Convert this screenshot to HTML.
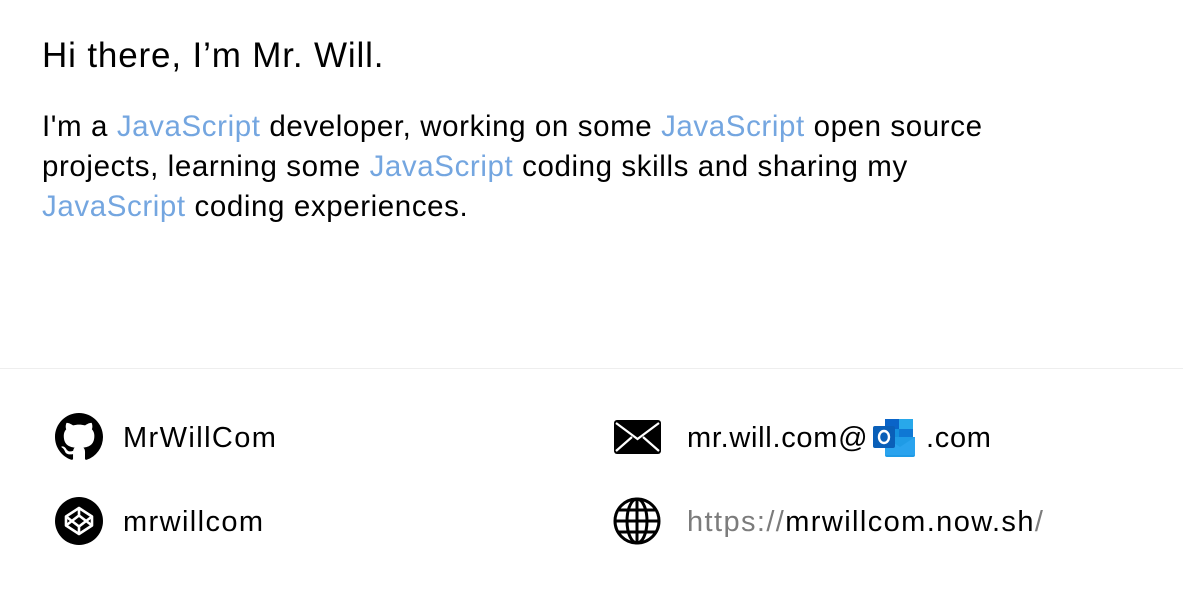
<!DOCTYPE html>
<html><head><meta charset="utf-8"><style>
html,body{margin:0;padding:0;background:#fff;width:1183px;height:599px;overflow:hidden;font-family:"Liberation Sans",sans-serif;color:#000}
h1{position:absolute;left:42px;top:34px;margin:0;font-size:35px;font-weight:normal;line-height:44px;letter-spacing:0.85px}
p{position:absolute;left:42px;top:107px;margin:0;font-size:29.5px;line-height:40px;width:1100px;letter-spacing:0.6px}
.b{color:#74a6e0}
.hr{position:absolute;left:0;top:368px;width:1183px;height:1px;background:#eee}
.t{position:absolute;font-size:29px;line-height:34px;letter-spacing:1.4px}
svg{position:absolute}
</style></head><body>
<h1>Hi there, I’m Mr. Will.</h1>
<p>I'm a <span class="b">JavaScript</span> developer, working on some <span class="b">JavaScript</span> open source<br>projects, learning some <span class="b">JavaScript</span> coding skills and sharing my<br><span class="b">JavaScript</span> coding experiences.</p>
<div class="hr"></div>

<svg style="left:55px;top:413px" width="48" height="48" viewBox="0 0 16 16"><path fill="#000" d="M8 0C3.58 0 0 3.580 0 8c0 3.54 2.29 6.53 5.47 7.59.4.07.55-.17.55-.38 0-.19-.01-.82-.01-1.49-2.01.37-2.530-.49-2.690-.94-.09-.23-.48-.94-.82-1.130-.28-.15-.68-.52-.01-.53.63-.01 1.08.58 1.23.82.72 1.21 1.870.87 2.33.66.07-.52.28-.87.51-1.070-1.78-.2-3.64-.89-3.64-3.95 0-.87.31-1.59.82-2.15-.08-.2-.36-1.02.08-2.12 0 0 .67-.21 2.2.82.64-.18 1.32-.27 2-.27.68 0 1.36.09 2 .27 1.53-1.04 2.2-.82 2.2-.82.44 1.1.16 1.92.08 2.12.51.56.82 1.27.82 2.15 0 3.07-1.87 3.75-3.65 3.95.29.25.54.73.54 1.48 0 1.07-.01 1.93-.01 2.2 0 .21.15.46.55.38A8.013 8.013 0 0016 8c0-4.420-3.58-8-8-8z"/></svg>
<div class="t" style="left:123px;top:421px">MrWillCom</div>

<svg style="left:55px;top:497px" width="48" height="48" viewBox="0 0 48 48"><circle cx="24" cy="24" r="24" fill="#000"/><g fill="none" stroke="#fff" stroke-width="2.6" stroke-linejoin="round"><path d="M24 11L37 19.5V28.5L24 37L11 28.5V19.5Z"/><path d="M24 11V18.5M24 29.5V37M11 19.5L24 29.5L37 19.5M11 28.5L24 18.5L37 28.5"/></g></svg>
<div class="t" style="left:123px;top:505px">mrwillcom</div>

<svg style="left:614px;top:420px" width="47" height="34" viewBox="0 0 47 34"><rect width="47" height="34" rx="3" fill="#000"/><path d="M2 3L23.5 19L45 3M2 31L18 17M45 31L29 17" stroke="#fff" stroke-width="2.2" fill="none"/></svg>
<div class="t" style="left:687px;top:421px;letter-spacing:0.7px">mr.will.com@</div>
<svg style="left:873px;top:419px" width="43" height="38" viewBox="0 0 43 38"><rect x="12" y="0" width="28" height="20" fill="#0a64c8"/><rect x="26" y="0" width="14" height="10" fill="#28a8ea"/><rect x="26" y="10" width="14" height="10" fill="#0f78d4"/><rect x="12" y="10" width="14" height="10" fill="#1490df"/><path d="M12 18L42 18V36Q42 38 40 38H14Q12 38 12 36Z" fill="#1f9be6"/><path d="M12 18L27 28L42 18V36L12 36Z" fill="#2aa3ee"/><rect x="0" y="7" width="22" height="22" rx="2" fill="#0a5fb8"/><ellipse cx="11" cy="18" rx="5" ry="6" fill="none" stroke="#fff" stroke-width="2.4"/></svg>
<div class="t" style="left:926px;top:421px;letter-spacing:0.7px">.com</div>

<svg style="left:613px;top:497px" width="48" height="48" viewBox="0 0 48 48"><g fill="none" stroke="#000" stroke-width="3"><circle cx="24" cy="24" r="22"/><ellipse cx="24" cy="24" rx="10" ry="22"/><path d="M24 2V46M2 24H46M6 13H42M6 35H42"/></g></svg>
<div class="t" style="left:687px;top:505px"><span style="color:#7c7c7c">https://</span>mrwillcom.now.sh<span style="color:#7c7c7c">/</span></div>
</body></html>
